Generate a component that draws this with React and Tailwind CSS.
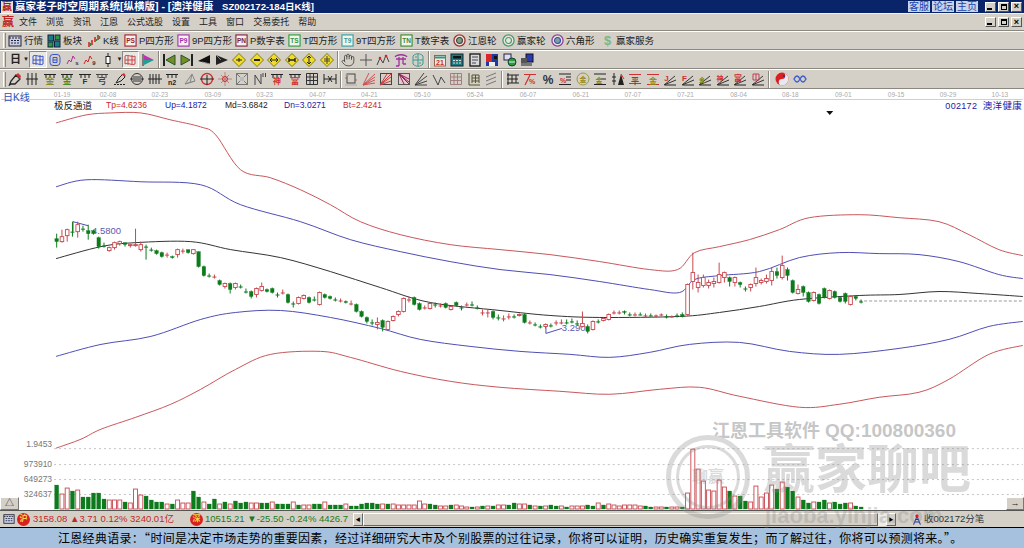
import React from 'react';
import { Hand } from 'lucide-react';

const F = 'Liberation Sans, Noto Sans CJK SC, sans-serif';

// [颜色, 实体上, 实体下, 上影, 下影]
const candles = [
  ['g',239,242,234,248],['r',237,242,230,243],['r',230,236,229,242],['g',232,232,222,237],['r',225,232,222,238],['g',229,229,226,232],
  ['g',231,234,225,240],['g',231,234,230,235],['g',238,247,237,249],['g',246,246,243,248],['r',248,251,247,252],['r',243,248,242,250],
  ['r',242,244,241,246],['g',243,245,243,247],['r',245,246,244,248],['r',245,246,229,247],['r',245,250,242,252],['g',247,247,245,260],
  ['g',250,250,248,252],['g',251,254,250,255],['g',253,257,252,258],['r',255,255,253,258],['g',257,258,256,259],['r',250,255,249,258],
  ['r',251,251,249,254],['g',250,253,250,254],['r',250,254,250,255],['g',252,267,252,268],['g',267,276,266,277],['g',276,276,274,278],
  ['r',277,277,275,279],['g',281,285,280,286],['r',284,287,283,289],['g',284,290,283,294],['r',284,288,283,290],
  ['g',287,287,285,289],['g',292,292,289,294],['g',292,297,291,299],['r',289,295,288,298],['r',287,291,283,292],['g',290,292,289,293],
  ['g',289,293,288,294],['g',295,295,293,298],['r',293,293,290,295],['g',295,303,294,304],['g',304,304,302,308],['r',298,304,297,305],
  ['r',296,299,295,300],['g',298,303,297,304],['g',300,300,297,302],['r',293,305,292,306],['g',295,298,294,299],['g',297,299,296,300],
  ['g',300,300,298,302],['r',301,301,299,303],['g',302,303,301,304],['r',304,304,301,306],['g',305,312,304,313],
  ['g',312,317,311,318],['g',318,322,317,324],['g',323,323,320,326],['r',323,325,318,330],['g',321,328,320,332],['r',322,330,321,331],
  ['r',317,321,316,322],['r',312,315,311,317],['r',299,312,298,313],['r',300,300,297,303],['g',298,305,297,306],['g',304,310,303,311],
  ['r',308,308,306,310],['r',304,309,303,310],['g',305,305,303,308],['r',306,306,304,308],['g',304,308,303,309],['r',307,310,306,311],
  ['g',303,306,302,307],['g',308,308,306,311],['r',305,305,303,307],['g',305,305,302,307],['g',308,308,306,310],['r',313,313,310,316],
  ['r',313,313,310,318],['g',312,318,311,320],['g',318,318,315,321],['r',319,319,316,322],['r',317,317,314,320],['g',317,317,315,319],
  ['r',315,316,314,317],['g',315,323,314,324],['r',323,323,321,325],['g',325,325,323,327],['g',327,327,325,329],['r',325,327,324,329],
  ['g',326,326,324,328],['r',323,323,321,326],['r',323,323,320,325],['g',323,323,320,325],['g',322,322,319,324],['g',324,324,321,326],
  ['r',324,327,312,328],['g',327,332,325,334],['r',322,330,321,331],['g',322,322,320,324],['r',319,321,318,322],['r',315,320,314,321],
  ['r',313,313,311,315],['r',313,313,311,315],['g',312,313,311,315],['g',315,315,313,317],['r',315,315,313,317],['g',315,315,313,316],
  ['r',316,316,314,318],['g',316,316,314,317],['r',316,316,315,318],['r',315,315,314,317],['g',317,317,315,319],['r',317,317,316,318],
  ['g',316,316,314,318],['g',315,317,313,318],['r',285,315,284,316],['r',273,282,253,290],['r',283,288,275,293],['r',278,286,275,288],
  ['r',283,286,280,289],['r',282,284,278,288],['r',275,283,263,284],['r',273,278,272,283],['g',278,282,277,287],['r',278,283,277,287],
  ['g',283,285,282,288],['g',289,289,287,292],['r',285,288,284,292],['r',278,284,268,287],['r',281,283,279,285],['r',279,282,275,284],
  ['r',272,281,268,286],['g',272,276,268,279],['r',266,278,256,280],['g',270,276,268,281],['g',281,293,280,294],['r',290,294,285,295],
  ['g',287,293,286,297],['g',293,302,292,303],['r',293,301,292,302],['g',295,304,294,305],['g',289,298,288,299],['r',291,299,290,300],
  ['g',292,298,291,299],['g',298,302,297,303],['g',294,302,293,304],['r',297,305,296,306],['g',297,299,296,301],['g',302,302,300,304],
];

const volHead = 'g24 r15 r21 g18 r19 g12 g12 g16 g16 g10 r9 r9 r9 g7 r6 r20 r14 g13 g9 g7 g7 r5 g5 r9 r6 r6 g18 g12 r7 g5 g10 r5 g7 r5 g8 g6 g7 r6 r6 g6 g6 r7 g5 g5 g5 r7 g4 r4 r4 g5 g5 r7 g4 g4 g4 r5 g3 g3 g5 g6 g6 g5 r5 g5 r5 r4 r4 r4 r4 r8 r5 g5 g4 r3 r3 g4 r4 r3 r2 g2 r2 g3 r3 g3 r4 r4 g4 g6 r5 r5 g4 r3 g3 r3 g4 g3 r3 g2 r3 r3 r3 g4 g3 r6 g4 r5 r4 r3 r4 r4 r4 r3 g3 g2 r2 r2 g2 r2 r2 g2 r2 g3 g4';
const volTail = 'r16 r60 r40 r28 r19 r18 r29 r22 g18 r13 g13 g8 r7 r23 r12 r16 r24 g20 r27 g22 g18 r12 g9 g6 r7 g7 g9 r6 g7 g5 g6 r6 g3 g2';
const volumes = [...volHead.split(' ').slice(0, 120), ...volTail.split(' ')];

const bands = [
  { c: '#c8565a', p: '55,123 85,115 110,113 140,113 170,120 200,127 215,135 240,170 270,178 300,190 330,205 360,222 400,235 450,245 500,250 550,255 600,262 650,270 678,270 695,253 720,247 750,240 780,230 810,218 860,215 900,218 940,222 970,235 1000,250 1024,256' },
  { c: '#4d4db5', p: '55,187 85,180 140,182 200,185 240,205 300,222 350,240 400,252 450,262 500,270 550,275 600,282 650,290 680,293 695,280 720,276 760,272 800,258 840,253 880,254 920,255 960,262 1000,275 1024,279' },
  { c: '#333333', p: '55,259 100,247 135,243 190,242 230,250 280,258 330,272 380,288 430,303 500,311 550,316 600,318 680,317 720,313 760,307 800,300 860,296 900,295 940,292 980,294 1024,297' },
  { c: '#4d4db5', p: '55,357 100,345 150,337 200,320 235,313 280,311 330,318 380,329 420,340 470,347 520,352 570,355 610,358 650,353 690,345 740,343 790,352 840,355 900,349 950,340 990,327 1024,322' },
  { c: '#c8565a', p: '55,449 80,440 100,430 135,418 170,405 200,390 235,370 270,355 320,352 350,358 400,372 450,382 500,388 560,392 610,395 660,390 700,388 740,397 800,408 840,405 880,398 920,393 950,380 990,355 1024,346' },
];

const smooth = (str) => {
  const p = str.split(' ').map((s) => s.split(',').map(Number));
  let d = `M${p[0][0]} ${p[0][1]}`;
  for (let i = 0; i < p.length - 1; i++) {
    const a = p[i - 1] || p[i];
    const b = p[i];
    const c = p[i + 1];
    const e = p[i + 2] || c;
    const c1 = [b[0] + (c[0] - a[0]) / 6, b[1] + (c[1] - a[1]) / 6];
    const c2 = [c[0] - (e[0] - b[0]) / 6, c[1] - (e[1] - b[1]) / 6];
    d += `C${c1[0]} ${c1[1]} ${c2[0]} ${c2[1]} ${c[0]} ${c[1]}`;
  }
  return d;
};

const dates = [['01-19',61],['02-08',107],['02-23',159],['03-09',212],['03-23',264],['04-07',317],['04-21',369],['05-10',422],['05-24',475],['06-07',528],['06-21',581],['07-07',633],['07-21',686],['08-04',739],['08-18',791],['09-01',844],['09-15',897],['09-29',949],['10-13',1001]];

const RED = '#c8464e';
const GREEN = '#0d7a1c';
const cx = (i) => 55.6 + 5.27 * i;

const Chart = () => (
  <svg viewBox="0 89 1024 422" className="absolute inset-0 w-full h-full">
    {dates.map(([d, x]) => (
      <text key={d} x={x} y={97} fontSize="6.5" fill="#aaaaaa" textAnchor="middle" fontFamily={F}>{d}</text>
    ))}
    <line x1="0" x2="1024" y1="99.5" y2="99.5" stroke="#cfcfcf" />
    <polygon points="827,111 834,111 830.5,115" fill="#111" />
    {[449, 465, 480, 495].map((y) => (
      <line key={y} x1="53" x2="1024" y1={y + 0.5} y2={y + 0.5} stroke="#c4c4c4" strokeDasharray="2 3" />
    ))}
    <line x1="860" x2="1024" y1="301.5" y2="301.5" stroke="#999" strokeDasharray="3 2" />
    {[['1.9453', 448], ['973910', 468], ['649273', 483], ['324637', 498]].map(([t, y]) => (
      <text key={t} x="51" y={y} fontSize="8.5" fill="#777" textAnchor="end" fontFamily={F}>{t}</text>
    ))}
    {bands.map((b, i) => (
      <path key={i} d={smooth(b.p)} fill="none" stroke={b.c} strokeWidth="1" />
    ))}
    <polyline points="72,232 72,222 87,226" fill="none" stroke="#4d4db5" />
    <text x="91" y="234" fontSize="9.5" fill="#5a5ab0" fontFamily={F}>4.5800</text>
    <polyline points="546,327 546,334 562,329" fill="none" stroke="#4d4db5" />
    <text x="562" y="332" fontSize="9.5" fill="#5a5ab0" fontFamily={F}>3.290</text>
    {candles.map(([c, t, b, h, l], i) => {
      const x = cx(i);
      const col = c === 'r' ? RED : GREEN;
      return (
        <g key={i}>
          <line x1={x} x2={x} y1={h} y2={l} stroke={col} />
          {t === b ? (
            <line x1={x - 2} x2={x + 2} y1={t + 0.5} y2={t + 0.5} stroke={col} />
          ) : (
            <rect x={x - 1.8} y={t} width="3.6" height={b - t} fill={c === 'r' ? '#fff' : col} stroke={col} strokeWidth={c === 'r' ? 0.9 : 0.3} />
          )}
        </g>
      );
    })}
    {volumes.map((v, i) => {
      const h = Number(v.slice(1));
      const red = v[0] === 'r';
      return (
        <rect key={i} x={cx(i) - 2} y={510 - h} width="4" height={h} fill={red ? '#fff' : GREEN} stroke={red ? RED : GREEN} strokeWidth={red ? 0.9 : 0.3} />
      );
    })}
  </svg>
);

const I = ({ children, cls = '' }) => (
  <svg viewBox="0 0 14 14" fill="none" strokeWidth="1" className={`w-[14px] h-[14px] ${cls}`}>{children}</svg>
);

const Comb = ({ c = '#222', y = 2 }) => (
  <path d={`M1 ${y + 0.5}H13M3 ${y}V${y + 4}M7 ${y}V${y + 4}M11 ${y}V${y + 4}`} stroke={c} />
);
const Letter = ({ t, c, y = 12, s = 8, x = 7 }) => (
  <text x={x} y={y} fontSize={s} fill={c} textAnchor="middle" fontWeight="bold" fontFamily={F}>{t}</text>
);
const Fan = ({ c = '#222', c2 = '#222' }) => (
  <>
    <path d="M1 13L13 8M1 13L12 4" stroke={c} />
    <path d="M2 13H13" stroke={c2} />
  </>
);
const Grid = ({ c = '#555' }) => (
  <path d="M1.5 1.5H12.5V12.5H1.5ZM1.5 5H12.5M1.5 8.5H12.5M5 1.5V12.5M8.5 1.5V12.5" stroke={c} />
);
const Diamond = ({ children }) => (
  <I>
    <path d="M7 0.5L13.5 7L7 13.5L0.5 7Z" fill="#f2dc2a" stroke="#7a7a10" />
    {children}
  </I>
);
const Mesh = ({ c }) => (
  <path d="M2 3C5 1 9 5 12 3V11C9 13 5 9 2 11ZM2 7H12M5 2V12M9 2V12" stroke={c} />
);

const Tool = ({ icon, label, w }) => (
  <div className={`flex items-center gap-[2px] shrink-0 ${w}`}>
    {icon}
    <span className="text-[9.5px] leading-none text-[#222] whitespace-nowrap">{label}</span>
  </div>
);

const Box = ({ c, t }) => (
  <svg viewBox="0 0 14 14" className="w-[13px] h-[13px]">
    <rect x="1" y="1" width="12" height="12" fill="#f4f2ec" stroke={c} strokeWidth="1.2" />
    <text x="7" y="10" fontSize="7" fontWeight="bold" fill={c} textAnchor="middle" fontFamily={F}>{t}</text>
  </svg>
);

const Wheel = ({ a, b, c }) => (
  <svg viewBox="0 0 14 14" className="w-[13px] h-[13px]">
    <circle cx="7" cy="7" r="6" fill="#e8e6dc" stroke={a} strokeWidth="1.4" />
    <circle cx="7" cy="7" r="3.2" fill={c} stroke={b} strokeWidth="1.2" />
  </svg>
);

const Grip = ({ cls = '' }) => <div className={`w-[3px] h-[15px] border-x border-l-white border-r-[#8a8880] shrink-0 ${cls}`} />;
const Sep = () => <div className="w-[2px] h-[17px] border-l border-l-[#8a8880] border-r border-r-white shrink-0 mx-[1px]" />;

const Cell = ({ children, on }) => (
  <div className={`w-[17.5px] h-[17px] flex items-center justify-center shrink-0 ${on ? 'bg-[#e9e7e1] border border-t-[#8a8880] border-l-[#8a8880] border-r-white border-b-white' : ''}`}>
    {children}
  </div>
);

const row3a = [
  <Cell on><I><Mesh c="#3b55c8" /></I></Cell>,
  <Cell><I><rect x="2" y="1.5" width="10" height="11" rx="3" stroke="#3b55c8" /><path d="M5 4.5H9V9.5H5ZM5 7H9" stroke="#3b55c8" /></I></Cell>,
  <Cell><I><path d="M1 11L3 7L5 9L7 3L9 6" stroke="#b02ca0" /><Letter t="s" c="#333" x={11} s={6} /></I></Cell>,
  <Cell><I><path d="M1 11L3 7L5 9L7 3L9 6" stroke="#c82828" /><Letter t="9" c="#333" x={11} s={6} /></I></Cell>,
  <Cell><I><path d="M7 0V14" stroke="#222" /><rect x="5" y="3.5" width="4" height="7" fill="#fff" stroke="#222" /></I></Cell>,
];
const row3b = [
  <Cell><I><path d="M2 1V13" stroke="#222" strokeWidth="2" /><path d="M13 2V12L4 7Z" fill="#7a8a28" stroke="#1c5a28" /></I></Cell>,
  <Cell><I><path d="M12 1V13" stroke="#222" strokeWidth="2" /><path d="M1 2V12L10 7Z" fill="#7a8a28" stroke="#1c5a28" /></I></Cell>,
  <Cell><I><path d="M13 2V11L1 8Z" fill="#111" /><path d="M5 9L13 11" stroke="#999" /></I></Cell>,
  <Cell><I><path d="M1 2V12L13 7Z" fill="#222" /><path d="M1 2L6 7" stroke="#888" /></I></Cell>,
  <Cell><Diamond><path d="M4 7H10M7 5V9" stroke="#222" /></Diamond></Cell>,
  <Cell><Diamond><path d="M4 7H10" stroke="#222" strokeWidth="2" /></Diamond></Cell>,
  <Cell><Diamond><path d="M3 7H11M5 5L3 7L5 9M9 5L11 7L9 9" stroke="#222" /></Diamond></Cell>,
  <Cell><Diamond><path d="M4 5V9M10 5V9M4 7H10" stroke="#222" strokeWidth="1.4" /></Diamond></Cell>,
  <Cell><Diamond><path d="M7 3V11M5 5L7 3L9 5M5 9L7 11L9 9" stroke="#222" /></Diamond></Cell>,
  <Cell><Diamond><path d="M4 6H10M4 8H10M7 3V11" stroke="#444" /></Diamond></Cell>,
];
const row3c = [
  <Cell><Hand size={14} color="#333" strokeWidth={1.3} /></Cell>,
  <Cell><I><path d="M7 1V13M1 7H13" stroke="#555" /></I></Cell>,
  <Cell><I><path d="M1 12L4 5L7 10L10 2L13 9" stroke="#444" /><circle cx="4" cy="5" r="1.3" fill="#c82828" /><circle cx="10" cy="3" r="1.3" fill="#c82828" /></I></Cell>,
  <Cell><I><path d="M1 4C3 1 11 1 13 4M2 6H12M5 4V13M9 4V11M5 13H2M9 11H12" stroke="#a030a0" strokeWidth="1.3" /></I></Cell>,
  <Cell><I><path d="M2 3C5 0 9 0 12 3V11C9 14 5 14 2 11ZM7 1V13M2 7H12M4 4H6M8 10H10" stroke="#3a9a90" /></I></Cell>,
];
const row3d = [
  <Cell><I><rect x="1.5" y="2.5" width="11" height="10.5" fill="#f4e8d8" stroke="#a06050" /><path d="M1.5 4.5H12.5" stroke="#2a9a90" strokeWidth="2" /><Letter t="21" c="#c03030" y={12} s={7} /></I></Cell>,
  <Cell><I><rect x="1" y="1" width="12" height="12" fill="#1c7a80" stroke="#123" /><rect x="3" y="3" width="8" height="2.5" fill="#111" /><path d="M3 7.5H11M3 10H11" stroke="#ddd" strokeDasharray="2 1" /></I></Cell>,
  <Cell><I><rect x="2" y="1" width="10" height="12" fill="#d8d8d8" stroke="#222" strokeWidth="1.4" /><path d="M4 4H10M4 7H10M4 10H8" stroke="#445" /></I></Cell>,
  <Cell><I><rect x="1" y="1" width="12" height="12" fill="#1c3aa0" /><rect x="1" y="1" width="6" height="8" fill="#d82828" /><rect x="4" y="9" width="6" height="4" fill="#eee" /><rect x="9" y="3" width="3" height="3" fill="#111" /></I></Cell>,
  <Cell><I><rect x="1" y="1" width="7" height="6" fill="#dde" stroke="#224" /><circle cx="9" cy="9" r="4" fill="#2a9a3a" stroke="#143" /><path d="M6 9H12" stroke="#eee" /></I></Cell>,
  <Cell><I><rect x="6" y="1" width="7" height="8" fill="#2a3ab0" stroke="#112" /><rect x="1" y="5" width="6" height="5" fill="#555" /><rect x="1" y="10" width="11" height="3" fill="#777" /></I></Cell>,
];

const row4a = [
  <Cell><I><path d="M3 12L1.5 13L3 9L8 3L12 7L7 12Z" stroke="#222" strokeWidth="1.3" /><path d="M8 3L10 1L13 4L12 7Z" fill="#d03030" /></I></Cell>,
  <Cell><I><path d="M3 1V13M7 1V13M11 1V13M1 7H13" stroke="#222" /></I></Cell>,
  <Cell><I><Comb /><Letter t="金" c="#8a8a20" s={9} /></I></Cell>,
  <Cell><I><Comb /><Letter t="金" c="#4a8a30" s={9} /></I></Cell>,
  <Cell><I><Comb /><Letter t="F" c="#333" s={8} /></I></Cell>,
  <Cell><I><Comb c="#444" /><Letter t="弓" c="#444" s={8} /></I></Cell>,
  <Cell><I><path d="M3 11L6 6L10 2L12 5L8 9Z" stroke="#222" /><path d="M8 3L11 1L13 4Z" fill="#d03030" /><path d="M1 12.5H13" stroke="#222" strokeDasharray="2 1" /></I></Cell>,
  <Cell><I><circle cx="7" cy="7" r="5.5" stroke="#333" /><path d="M0 7H14M3 5H11M3 9H11" stroke="#333" /></I></Cell>,
  <Cell><I><path d="M2 2V12M5 2V12M8 2V12M11 2V12M0 7H14" stroke="#222" /></I></Cell>,
  <Cell><I><Comb /><Letter t="n2" c="#222" s={7} y={13} /></I></Cell>,
  <Cell><I><path d="M2 12L9 2L12 9ZM2 12L12 9M9 2L7 11" stroke="#888" /></I></Cell>,
  <Cell><I><circle cx="7" cy="7" r="5.5" stroke="#d03030" strokeWidth="1.4" /><path d="M0 7H14M7 3V13" stroke="#222" /></I></Cell>,
  <Cell><I><path d="M7 0V14M0 7H14M3 3L11 11M11 3L3 11" stroke="#c08080" /><circle cx="7" cy="7" r="2.5" stroke="#c03030" /></I></Cell>,
  <Cell><I><rect x="1.5" y="1.5" width="11" height="11" stroke="#777" /><path d="M1 1L13 13M13 1L1 13" stroke="#777" /><rect x="5" y="5" width="4" height="4" fill="#bbb" /></I></Cell>,
  <Cell><I><path d="M2 13V3L8 12V2M10 1V5M12.5 1V5" stroke="#444" /></I></Cell>,
  <Cell><I><Comb c="#222" /><Letter t="神" c="#d03030" s={8} /></I></Cell>,
  <Cell><I><Comb c="#222" /><Letter t="富" c="#d03030" s={8} /></I></Cell>,
  <Cell><I><Grid c="#333" /></I></Cell>,
  <Cell><I><path d="M1 2V12M13 2V12M1 7H13M5 4L7 7L5 10M9 4L7 7L9 10" stroke="#222" /></I></Cell>,
];
const row4b = [
  <Cell><I><rect x="3" y="2" width="8" height="9" stroke="#444" /><path d="M1 3H5M1 13H13" stroke="#aaa" /><path d="M1 6H3M11 8H13" stroke="#aa6050" /></I></Cell>,
  <Cell><I><path d="M1 13L13 2M1 13L13 5M1 13L13 8M1 13L13 11M1 13L7 1" stroke="#d05050" /></I></Cell>,
  <Cell><I><rect x="1.5" y="1.5" width="11" height="11" stroke="#444" /><path d="M1 13L12 2M1 13L12 5M1 13L12 9M1 13L8 2" stroke="#c84040" /></I></Cell>,
  <Cell><I><rect x="1.5" y="1.5" width="11" height="11" fill="#e8c8c8" stroke="#555" /><path d="M2 2L12 12M2 2L12 7M2 2L7 12M2 2L12 10" stroke="#902060" /></I></Cell>,
  <Cell><I><path d="M1 13L13 4M1 13L13 9M1 13H13M1 13L10 1" stroke="#444" /></I></Cell>,
  <Cell><I><path d="M1 3L6 13L9 5L13 11" stroke="#444" /></I></Cell>,
  <Cell><I><Grid c="#a08080" /></I></Cell>,
  <Cell><I><path d="M2 1V13H13M5 3H12M5 6H12M5 9H12M5 3V11M8.5 3V11M12 3V11" stroke="#553" /></I></Cell>,
  <Cell><I><path d="M2 5L12 1M2 9L12 5M2 13L12 9" stroke="#777" /></I></Cell>,
];
const row4c = [
  <Cell><I><path d="M2 1V13M1 3H13M1 7H12M1 11H13M6 3V11M10 3V11" stroke="#222" /></I></Cell>,
  <Cell><I><path d="M1 2.5H13M2 13L7 3" stroke="#d03030" strokeWidth="1.2" /><Letter t="%" c="#c83030" x={9} s={7} /></I></Cell>,
  <Cell><I><Letter t="%" c="#333" s={12} y={12} /></I></Cell>,
  <Cell><I><path d="M1 2H13M8 5H13M8 8H13M1 12.5H13" stroke="#222" /><Letter t="%" c="#d03030" x={5} s={7} y={11} /></I></Cell>,
  <Cell><I><circle cx="7" cy="7" r="6" stroke="#9a9a40" /><Letter t="金" c="#9a8a20" s={7} y={10} /></I></Cell>,
  <Cell><I><path d="M1 2H13M8 7H13M1 12.5H13" stroke="#222" /><Letter t="金" c="#7a8a20" x={6} s={7} y={11} /></I></Cell>,
  <Cell><I><path d="M3 1V13M1 5H5M1 9H5" stroke="#222" /><path d="M7 13L10 2L13 13Z" fill="#222" /><path d="M10 2L13 7" stroke="#d03030" /></I></Cell>,
  <Cell><I><path d="M1 2.5H13M1 11.5H13" stroke="#d03030" /><Letter t="平" c="#555" s={8} /></I></Cell>,
  <Cell><I><path d="M1 2.5H13M1 12.5H13" stroke="#d03030" /><Letter t="金" c="#8a8a20" s={8} /></I></Cell>,
  <Cell><I><Fan c="#333" /><Letter t="J" c="#d03030" x={3.5} y={9} s={8} /></I></Cell>,
  <Cell><I><Fan c="#333" /><Letter t="F" c="#d03030" x={3.5} y={9} s={8} /></I></Cell>,
  <Cell><I><Fan c="#333" /><Letter t="金" c="#7a8a20" x={4} y={10} s={6} /></I></Cell>,
  <Cell><I><Fan c="#333" /><Letter t="神" c="#d03030" x={4} y={9} s={7} /></I></Cell>,
  <Cell><I><Fan c="#333" /><Letter t="富" c="#d03030" x={5} y={9} s={8} /></I></Cell>,
  <Cell><I><Fan c="#333" /><path d="M2 2H8V8H2ZM5 2V8" stroke="#c04050" /></I></Cell>,
];

const WinBtn = ({ t }) => (
  <div className="w-[11px] h-[10px] bg-[#d4d0c8] border border-t-white border-l-white border-r-[#555] border-b-[#555] flex items-center justify-center shrink-0">
    {t === 'min' && <div className="w-[5px] h-[2px] bg-black mt-[4px] -ml-[2px]" />}
    {t === 'max' && <div className="w-[6px] h-[6px] border border-black border-t-2" />}
    {t === 'x' && <span className="text-[9px] leading-none font-bold text-black">×</span>}
  </div>
);

const Circle = ({ t, c }) => (
  <div className={`w-[13px] h-[13px] rounded-full flex items-center justify-center shrink-0 text-[8px] leading-none font-bold text-[#f5d84a] ${c}`}>{t}</div>
);

export default function App() {
  return (
    <div className="w-[1024px] h-[548px] overflow-hidden flex flex-col bg-[#d4d0c8] font-['Liberation_Sans','Noto_Sans_CJK_SC',sans-serif]">
      {/* title bar */}
      <div className="h-[13px] bg-[#0a246a] flex items-center shrink-0">
        <div className="w-[12px] h-[12px] ml-[1px] bg-[#e8e0d0] text-[#b01818] text-[10px] leading-none font-bold flex items-center justify-center">赢</div>
        <span className="ml-[2px] text-[10.5px] leading-none font-bold text-white whitespace-pre">赢家老子时空周期系统[纵横版] - [澳洋健康   <span className="text-[9.5px]">SZ002172-184日K线]</span></span>
        <div className="ml-auto flex items-center gap-[2px] mr-[2px]">
          {['客服', '论坛', '主页'].map((t) => (
            <div key={t} className="w-[22px] h-[11px] bg-[#c8d4e8] text-[#2040b0] text-[10px] leading-none flex items-center justify-center">{t}</div>
          ))}
          <div className="w-[3px]" />
          <WinBtn t="min" />
          <WinBtn t="max" />
          <WinBtn t="x" />
        </div>
      </div>
      <div className="h-[1px] bg-[#f4f2ee] shrink-0" />

      {/* menu */}
      <div className="h-[17px] flex items-center border-b border-b-[#8a8880] shrink-0">
        <div className="w-[12px] ml-[2px] text-[#c02020] text-[12px] leading-none font-bold">赢</div>
        <div className="flex items-center gap-[9px] ml-[5px] text-[9px] leading-none text-[#222]">
          {['文件', '浏览', '资讯', '江恩', '公式选股', '设置', '工具', '窗口', '交易委托', '帮助'].map((m) => (
            <span key={m}>{m}</span>
          ))}
        </div>
        <div className="ml-auto flex items-center gap-[2px] mr-[2px]">
          <WinBtn t="min" />
          <WinBtn t="max" />
          <WinBtn t="x" />
        </div>
      </div>

      {/* toolbar 1 */}
      <div className="h-[19px] flex items-center pl-[3px] border-t border-t-white border-b border-b-[#8a8880] shrink-0">
        <Grip />
        <div className="flex items-center ml-[2px]">
          <Tool w="w-[39px]" label="行情" icon={<I><rect x="1" y="2" width="12" height="10" fill="#c8d0e8" stroke="#223" /><path d="M1 4H13M3 6.5H11M3 9H11" stroke="#223" strokeDasharray="2 1" /></I>} />
          <Tool w="w-[40px]" label="板块" icon={<I><rect x="1" y="1" width="5.5" height="6" fill="#1c7a80" stroke="#124" /><rect x="8" y="1" width="5" height="5" fill="#2a9a3a" stroke="#124" /><rect x="1" y="8" width="5" height="5" fill="#2a9a3a" stroke="#124" /><rect x="7.5" y="7" width="5.5" height="6" fill="#1c7a80" stroke="#124" /></I>} />
          <Tool w="w-[37px]" label="K线" icon={<I><path d="M2 13V8M5 11V6M8 8V3M11 6V1" stroke="#c82020" strokeWidth="1.5" /><path d="M3.5 12V9M9.5 7V5M12.5 5V2" stroke="#2a8a2a" strokeWidth="1.5" /></I>} />
          <Tool w="w-[53px]" label="P四方形" icon={<Box c="#a02030" t="PS" />} />
          <Tool w="w-[58px]" label="9P四方形" icon={<Box c="#a030b0" t="P9" />} />
          <Tool w="w-[53px]" label="P数字表" icon={<Box c="#802040" t="PN" />} />
          <Tool w="w-[53px]" label="T四方形" icon={<Box c="#2a9a40" t="TS" />} />
          <Tool w="w-[59px]" label="9T四方形" icon={<Box c="#30a0a0" t="T9" />} />
          <Tool w="w-[53px]" label="T数字表" icon={<Box c="#3a8a30" t="TN" />} />
          <Tool w="w-[49px]" label="江恩轮" icon={<Wheel a="#a03030" b="#444" c="#7aa08a" />} />
          <Tool w="w-[49px]" label="赢家轮" icon={<Wheel a="#4a9a70" b="#4a9a70" c="#e8e6dc" />} />
          <Tool w="w-[50px]" label="六角形" icon={<Wheel a="#9040a0" b="#3050b0" c="#80a0a0" />} />
          <Tool w="w-[56px]" label="赢家服务" icon={<span className="w-[13px] text-center text-[13px] leading-none font-bold text-[#7ab880]">$</span>} />
        </div>
      </div>

      {/* toolbar 2 */}
      <div className="h-[19px] flex items-center pl-[3px] border-t border-t-white border-b border-b-[#8a8880] shrink-0">
        <Grip />
        <span className="ml-[4px] w-[11px] text-[11px] leading-none font-bold text-[#222]">日</span>
        <span className="ml-[2px] text-[6px] text-[#222] w-[6px]">▼</span>
        {row3a.map((c, i) => <React.Fragment key={i}>{c}</React.Fragment>)}
        <span className="text-[6px] text-[#222] w-[5px]">▼</span>
        <Cell on><I><Mesh c="#c84848" /></I></Cell>
        <Cell><I><path d="M2 1V13" stroke="#222" /><path d="M3 2L13 7L3 7Z" fill="#c030b0" /><path d="M3 7L13 7L3 12Z" fill="#20a090" /></I></Cell>
        <Sep />
        {row3b.map((c, i) => <React.Fragment key={i}>{c}</React.Fragment>)}
        <Sep />
        {row3c.map((c, i) => <React.Fragment key={i}>{c}</React.Fragment>)}
        <Sep />
        {row3d.map((c, i) => <React.Fragment key={i}>{c}</React.Fragment>)}
      </div>

      {/* toolbar 3 */}
      <div className="h-[19px] flex items-center pl-[3px] border-t border-t-white shrink-0">
        <Grip />
        {row4a.map((c, i) => <React.Fragment key={i}>{c}</React.Fragment>)}
        <Sep />
        {row4b.map((c, i) => <React.Fragment key={i}>{c}</React.Fragment>)}
        <Sep />
        {row4c.map((c, i) => <React.Fragment key={i}>{c}</React.Fragment>)}
        <Sep />
        <div className="w-[3px]" />
        <Cell><svg viewBox="0 0 14 14" className="w-[14px] h-[14px]"><circle cx="7" cy="7" r="6.5" fill="#d82020" /><path d="M7 .5A6.5 6.5 0 0 1 7 13.5A3.2 3.2 0 0 1 7 7A3.2 3.2 0 0 0 7 .5Z" fill="#e8e8f0" /><circle cx="9" cy="4" r="1" fill="#2030a0" /></svg></Cell>
        <Cell><I><path d="M1 7C3 3 5 3 7 7S11 11 13 7C11 3 9 3 7 7S3 11 1 7Z" stroke="#4060c8" strokeWidth="1.4" /></I></Cell>
      </div>
      <div className="h-[1px] bg-[#8a8880] shrink-0" />

      {/* chart + status */}
      <div className="relative h-[439px] shrink-0 flex flex-col">
        <div className="relative h-[422px] bg-white shrink-0 border-b border-b-[#555]">
          <Chart />
          <div className="relative flex text-[8.5px] leading-none pt-[12px] pl-[54px]">
            <span className="w-[52px] text-[9.5px] text-[#222]">极反通道</span>
            <span className="w-[59px] text-[#c82828]">Tp=4.6236</span>
            <span className="w-[60px] text-[#2020a8]">Up=4.1872</span>
            <span className="w-[59px] text-[#222]">Md=3.6842</span>
            <span className="w-[59px] text-[#2020a8]">Dn=3.0271</span>
            <span className="text-[#c82828]">Bt=2.4241</span>
            <span className="ml-auto mr-[2px] text-[#2020a8] whitespace-pre text-[9px] tracking-[0.3px]">002172  <span className="text-[9.5px]">澳洋健康</span></span>
          </div>
          <span className="absolute left-[3px] top-[4px] text-[10px] leading-none text-[#2a50b8]">日K线</span>
          <div className="absolute left-0 bottom-0 w-[19px] h-[13px] bg-[#d4d0c8] border border-t-white border-l-white border-r-[#777] border-b-[#777] flex items-center justify-center text-[9px] leading-none text-[#222]">△</div>
          <div className="absolute right-0 bottom-0 w-[18px] h-[13px] bg-[#d4d0c8] border border-t-white border-l-white border-r-[#777] border-b-[#777] flex items-center justify-center text-[9px] leading-none text-[#222]">→</div>
        </div>

        {/* status bar */}
        <div className="h-[17px] flex items-center text-[9.5px] leading-none whitespace-pre border-b border-b-black shrink-0">
          <svg viewBox="0 0 14 14" className="w-[12px] h-[12px] ml-[3px] shrink-0"><rect x="1" y="2" width="12" height="10" fill="#c8d0e8" stroke="#223" /><path d="M1 4H13M3 6.5H11M3 9H11" stroke="#223" strokeDasharray="2 1" /></svg>
          <div className="ml-[2px]"><Circle t="沪" c="bg-[#d82020]" /></div>
          <span className="ml-[3px] w-[141px] text-[#c02828]">3158.08 ▲3.71 0.12% 3240.01亿</span>
          <div className="ml-[16px]"><Circle t="深" c="bg-[#d82020]" /></div>
          <span className="ml-[2px] w-[148px] text-[#1c7a1c]">10515.21 ▼-25.50 -0.24% 4426.7</span>
          <div className="w-[10px] h-[13px] bg-[#d4d0c8] border border-t-white border-l-white border-r-[#666] border-b-[#666] flex items-center justify-center text-[5px] shrink-0">◀</div>
          <div className="w-[515px] h-[13px] bg-[#d4d0c8] border border-t-white border-l-white border-r-[#666] border-b-[#666] shrink-0" />
          <div className="w-[8px] h-[13px] bg-[#ecebe6] shrink-0" />
          <div className="w-[10px] h-[13px] bg-[#d4d0c8] border border-t-white border-l-white border-r-[#666] border-b-[#666] flex items-center justify-center text-[5px] shrink-0">▶</div>
          <svg viewBox="0 0 14 14" className="w-[12px] h-[13px] ml-[15px] shrink-0"><path d="M7 3L3 13M7 3L11 13M4 10H10M5 7H9" stroke="#2030a0" strokeWidth="1.2" fill="none" /><circle cx="7" cy="3" r="2" fill="#d82020" /></svg>
          <span className="ml-[1px] text-[9.5px] text-[#333]">收002172分笔</span>
        </div>

        {/* watermark */}
        <div className="absolute inset-0 overflow-hidden pointer-events-none text-[#888] opacity-30">
          <span className="absolute left-[712px] top-[332px] text-[18px] leading-none font-bold whitespace-pre text-[#444]">江恩工具软件 <span className="text-[19px]">QQ:100800360</span></span>
          <span className="absolute left-[763px] top-[355px] text-[52px] leading-none font-bold whitespace-pre">赢家聊吧</span>
          <div className="absolute left-[666px] top-[346px] w-[84px] h-[84px] rounded-full border-[5px] border-[#888] flex items-center justify-center">
            <div className="w-[64px] h-[64px] rounded-full border-[3px] border-[#888] flex items-center justify-center text-[16px] leading-none font-bold">聊赢</div>
          </div>
          <span className="absolute left-[765px] top-[416px] text-[22px] leading-none font-bold whitespace-pre">jiaoba.yinjia.com</span>
        </div>
      </div>

      {/* quote */}
      <div className="flex-1 bg-[#a6c1dd] flex items-center pl-[58px] text-[12px] leading-none tracking-[0.3px] text-black whitespace-pre font-['Noto_Sans_CJK_SC',sans-serif]">
        江恩经典语录：“时间是决定市场走势的重要因素，经过详细研究大市及个别股票的过往记录，你将可以证明，历史确实重复发生；而了解过往，你将可以预测将来。”。
      </div>
    </div>
  );
}
